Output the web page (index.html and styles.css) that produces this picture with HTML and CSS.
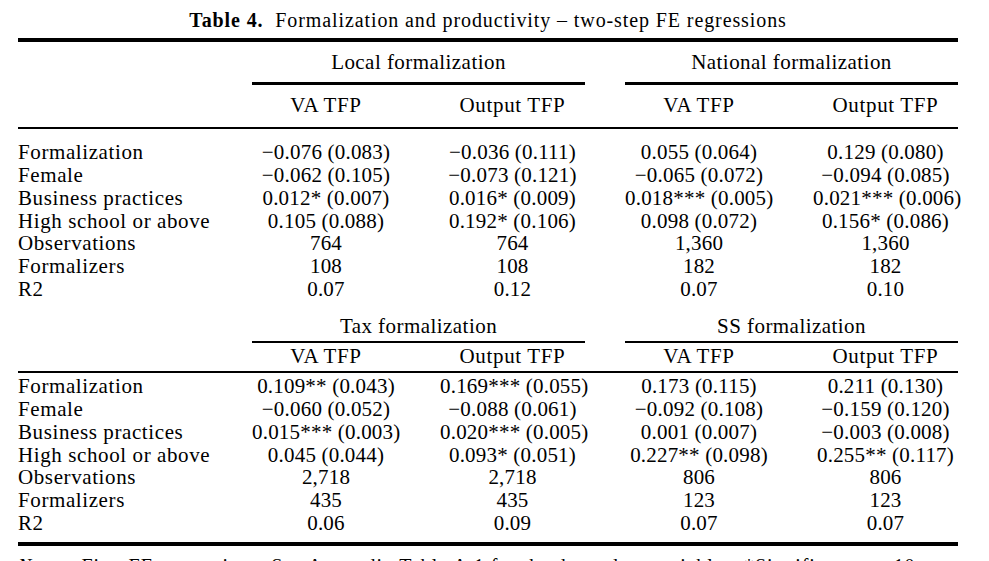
FILE: index.html
```html
<!DOCTYPE html>
<html lang="en">
<head>
<meta charset="utf-8">
<title>Table 4</title>
<link rel="stylesheet" href="styles.css">
</head>
<body>
<div class="page">
  <div class="title"><b>Table 4.</b>&nbsp; Formalization and productivity – two-step FE regressions</div>
  <div class="table">
    <div class="rule rule-thick"></div>

    <div class="row spanners spanners-top">
      <div></div>
      <div class="spanner">Local formalization</div>
      <div class="spanner">National formalization</div>
    </div>
    <div class="row heads heads-top">
      <div></div>
      <div class="head">VA TFP</div>
      <div class="head">Output TFP</div>
      <div class="head">VA TFP</div>
      <div class="head">Output TFP</div>
    </div>
    <div class="rule rule-thin"></div>

    <div class="body body-top">
      <div class="row data"><div class="label">Formalization</div><div class="num">−0.076 (0.083)</div><div class="num">−0.036 (0.111)</div><div class="num">0.055 (0.064)</div><div class="num">0.129 (0.080)</div></div>
      <div class="row data"><div class="label">Female</div><div class="num">−0.062 (0.105)</div><div class="num">−0.073 (0.121)</div><div class="num">−0.065 (0.072)</div><div class="num">−0.094 (0.085)</div></div>
      <div class="row data"><div class="label">Business practices</div><div class="num">0.012* (0.007)</div><div class="num">0.016* (0.009)</div><div class="num">0.018*** (0.005)</div><div class="num">0.021*** (0.006)</div></div>
      <div class="row data"><div class="label">High school or above</div><div class="num">0.105 (0.088)</div><div class="num">0.192* (0.106)</div><div class="num">0.098 (0.072)</div><div class="num">0.156* (0.086)</div></div>
      <div class="row data"><div class="label">Observations</div><div class="num">764</div><div class="num">764</div><div class="num">1,360</div><div class="num">1,360</div></div>
      <div class="row data"><div class="label">Formalizers</div><div class="num">108</div><div class="num">108</div><div class="num">182</div><div class="num">182</div></div>
      <div class="row data"><div class="label">R2</div><div class="num">0.07</div><div class="num">0.12</div><div class="num">0.07</div><div class="num">0.10</div></div>
    </div>

    <div class="row spanners spanners-bottom">
      <div></div>
      <div class="spanner spanner-thin">Tax formalization</div>
      <div class="spanner spanner-thin">SS formalization</div>
    </div>
    <div class="row heads heads-bottom">
      <div></div>
      <div class="head">VA TFP</div>
      <div class="head">Output TFP</div>
      <div class="head">VA TFP</div>
      <div class="head">Output TFP</div>
    </div>
    <div class="rule rule-thin"></div>

    <div class="body body-bottom">
      <div class="row data"><div class="label">Formalization</div><div class="num">0.109** (0.043)</div><div class="num">0.169*** (0.055)</div><div class="num">0.173 (0.115)</div><div class="num">0.211 (0.130)</div></div>
      <div class="row data"><div class="label">Female</div><div class="num">−0.060 (0.052)</div><div class="num">−0.088 (0.061)</div><div class="num">−0.092 (0.108)</div><div class="num">−0.159 (0.120)</div></div>
      <div class="row data"><div class="label">Business practices</div><div class="num">0.015*** (0.003)</div><div class="num">0.020*** (0.005)</div><div class="num">0.001 (0.007)</div><div class="num">−0.003 (0.008)</div></div>
      <div class="row data"><div class="label">High school or above</div><div class="num">0.045 (0.044)</div><div class="num">0.093* (0.051)</div><div class="num">0.227** (0.098)</div><div class="num">0.255** (0.117)</div></div>
      <div class="row data"><div class="label">Observations</div><div class="num">2,718</div><div class="num">2,718</div><div class="num">806</div><div class="num">806</div></div>
      <div class="row data"><div class="label">Formalizers</div><div class="num">435</div><div class="num">435</div><div class="num">123</div><div class="num">123</div></div>
      <div class="row data"><div class="label">R2</div><div class="num">0.06</div><div class="num">0.09</div><div class="num">0.07</div><div class="num">0.07</div></div>
    </div>

    <div class="rule rule-thick rule-end"></div>
    <div class="note"><i>Notes:</i> First FE regressions. See Appendix Table A.1 for the dependent variables. *Significance at 10</div>
  </div>
</div>
</body>
</html>
```

FILE: styles.css
```css
html, body {
  margin: 0;
  padding: 0;
  background: #ffffff;
}

body {
  font-family: "Liberation Serif", "Times New Roman", serif;
  color: #000000;
  overflow: hidden;
}

.page {
  padding-top: 8px;
  width: 989px;
}

.title {
  width: 940px;
  margin-left: 18px;
  text-align: center;
  font-size: 20px;
  line-height: 24px;
  letter-spacing: 0.9px;
  white-space: nowrap;
  margin-bottom: 6px;
}

.title b {
  font-weight: bold;
}

.table {
  width: 940px;
  margin-left: 18px;
  font-size: 21px;
}

.rule {
  background: #000000;
}

.rule-thick {
  height: 4px;
}

.rule-thin {
  height: 2px;
}

.rule-end {
  margin-top: 7px;
}

.row {
  display: grid;
  grid-template-columns: 194px 148px 145px 148px 145px;
  column-gap: 40px;
  white-space: nowrap;
}

.spanners {
  line-height: 23px;
  letter-spacing: 0.45px;
}

.spanner {
  grid-column: span 2;
  text-align: center;
  border-bottom: 3px solid #000000;
}

.spanners-top {
  padding-top: 9px;
}

.spanners-top .spanner {
  padding-bottom: 8px;
}

.spanners-bottom {
  padding-top: 15px;
}

.spanner-thin {
  border-bottom-width: 2px;
  padding-bottom: 2.6px;
}

.heads {
  line-height: 23px;
  letter-spacing: 0.65px;
}

.head {
  text-align: center;
}

.heads-top {
  padding: 9px 0 10px;
}

.heads-bottom {
  padding: 2.4px 0 2.6px;
}

.body-top {
  padding-top: 12.4px;
}

.body-top .data {
  line-height: 22.7px;
}

.body-bottom {
  padding-top: 2.4px;
}

.body-bottom .data {
  line-height: 22.8px;
}

.label {
  text-align: left;
  letter-spacing: 0.6px;
}

.num {
  text-align: center;
  letter-spacing: 0.2px;
}

.note {
  padding-top: 8px;
  font-size: 20px;
  line-height: 24px;
  letter-spacing: 0.9px;
  white-space: nowrap;
}
```
